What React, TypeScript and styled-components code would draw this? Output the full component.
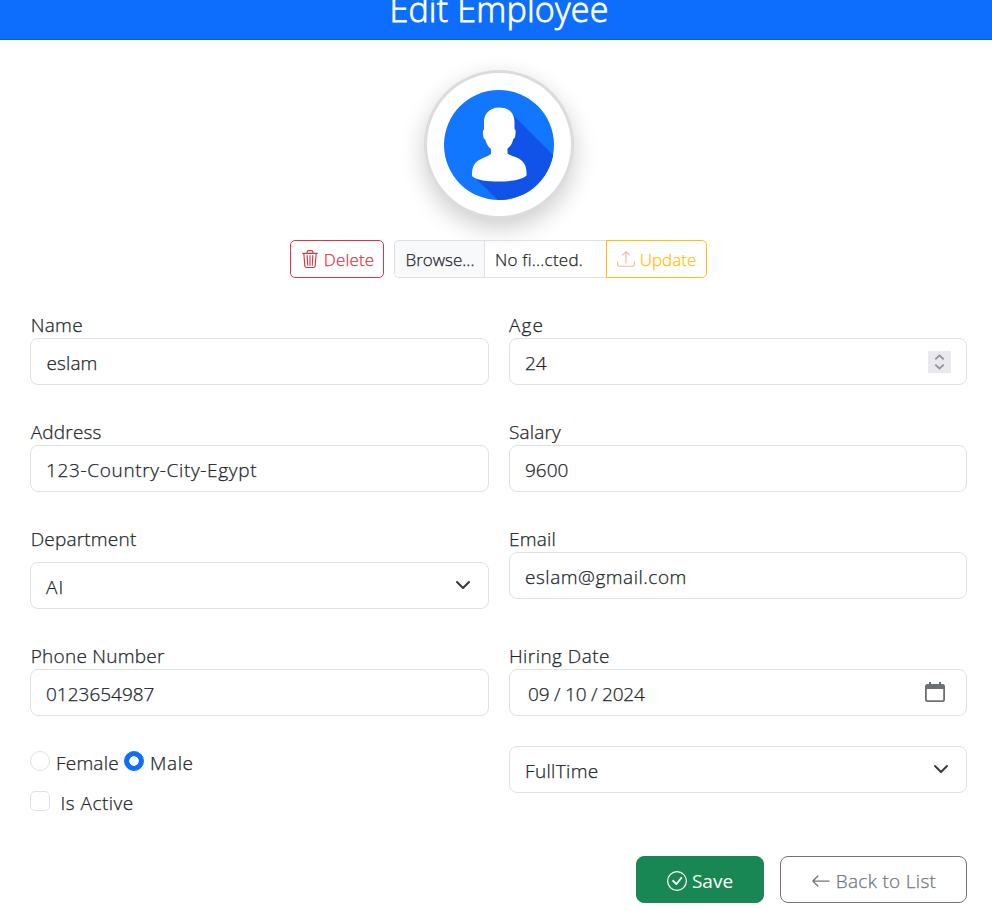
import React from 'react';
import styled, { createGlobalStyle } from 'styled-components';
import { BsTrash3, BsUpload, BsCheckCircle, BsArrowLeft } from 'react-icons/bs';

const GlobalStyle = createGlobalStyle`
  * { box-sizing: border-box; }
  body {
    margin: 0;
    background: #fff;
    color: #212529;
    font: 300 19px 'Open Sans', 'Noto Sans', sans-serif;
    -webkit-text-stroke: 0.25px currentColor;
    overflow: hidden;
  }
`;

const Header = styled.header`
  height: 40px;
  overflow: hidden;
  display: flex;
  justify-content: center;
  padding-left: 6px;
  background: #0d6efd;
  border-bottom: 1px solid #0b5ed7;
`;

const Title = styled.h1`
  margin: -15px 0 0;
  height: 48px;
  line-height: 48px;
  font-size: 34px;
  font-weight: 300;
  letter-spacing: 0.2px;
  -webkit-text-stroke: 0.8px currentColor;
  color: #fff;
  white-space: nowrap;
`;

const Content = styled.main`
  width: 937px;
  margin-left: 30px;
  padding-top: 30px;
  display: flex;
  flex-direction: column;
`;

const Avatar = styled.div`
  width: 150px;
  height: 149px;
  align-self: center;
  display: flex;
  align-items: center;
  justify-content: center;
  border: 3px solid #dcdcdc;
  border-radius: 50%;
  background: #fff;
  box-shadow: 0 9px 24px rgba(0, 0, 0, 0.2);
`;

const PhotoActions = styled.div`
  height: 38px;
  margin-top: 21px;
  align-self: center;
  display: flex;
  font-size: 17px;
  white-space: nowrap;
`;

const SmallButton = styled.button<{ $color: string; $width: number; $joined?: boolean }>`
  width: ${(p) => p.$width}px;
  height: 38px;
  padding: 0 0 0 ${(p) => (p.$joined ? 0 : 1)}px;
  display: flex;
  align-items: center;
  justify-content: center;
  gap: 5px;
  font: inherit;
  letter-spacing: ${(p) => (p.$joined ? 0 : 0.15)}px;
  color: ${(p) => p.$color};
  background: #fff;
  border: 1px solid ${(p) => p.$color};
  border-radius: ${(p) => (p.$joined ? '0 5px 5px 0' : '5px')};
`;

const FilePicker = styled.div`
  width: 212px;
  height: 38px;
  margin-left: 10px;
  display: flex;
  line-height: 37px;
  border: 1px solid #dee2e6;
  border-right: 0;
  border-radius: 5px 0 0 5px;
  overflow: hidden;
`;

const Browse = styled.span`
  width: 90px;
  padding-left: 10.5px;
  background: #f8f9fa;
  border-right: 1px solid #dee2e6;
`;

const FileName = styled.span`
  padding-left: 10px;
  letter-spacing: 0.23px;
`;

const Grid = styled.div`
  margin-top: 33px;
  display: grid;
  grid-template-columns: 459px 458px;
  column-gap: 20px;
  row-gap: 33px;
`;

const Field = styled.div<{ $raised?: boolean }>`
  margin-top: ${(p) => (p.$raised ? -3 : 0)}px;
  display: flex;
  flex-direction: column;
`;

const Label = styled.label<{ $gap?: number; $ls?: number; $left?: number }>`
  height: 27px;
  line-height: 28px;
  padding-left: ${(p) => p.$left ?? 0.7}px;
  margin-bottom: ${(p) => p.$gap ?? 0}px;
  letter-spacing: ${(p) => p.$ls ?? 0.2}px;
`;

const Control = styled.div<{ $inset?: number; $end?: number; $ls?: number }>`
  height: 47px;
  padding: 2px ${(p) => p.$end ?? 15}px 0 ${(p) => p.$inset ?? 15}px;
  display: flex;
  align-items: center;
  justify-content: space-between;
  letter-spacing: ${(p) => p.$ls ?? 0}px;
  border: 1px solid #dee2e6;
  border-radius: 8px;
  background: #fff;

  svg { margin-top: -2.5px; flex: none; }
`;

const Stepper = styled.span`
  width: 23px;
  height: 22px;
  margin-top: -2px;
  display: flex;
  align-items: center;
  justify-content: center;
  background: #e9e9ed;

  svg { margin: 0; }
`;

const Choices = styled.div`
  margin-top: -3px;
  display: flex;
  flex-direction: column;
  gap: 10px;
`;

const ChoiceLine = styled.div`
  height: 30px;
  display: flex;
  align-items: center;
`;

const Mark = styled.span<{ $round?: boolean; $on?: boolean }>`
  width: 20px;
  height: 20px;
  border-radius: ${(p) => (p.$round ? '50%' : '5px')};
  border: 1px solid ${(p) => (p.$on ? '#0d6efd' : '#dee2e6')};
  background: ${(p) => (p.$on ? 'radial-gradient(circle, #fff 4.4px, #0d6efd 5.1px) border-box' : '#fff')};
`;

const ChoiceText = styled.span<{ $left: number; $width?: number; $ls?: number }>`
  margin-left: ${(p) => p.$left}px;
  padding-top: 4px;
  width: ${(p) => (p.$width ? `${p.$width}px` : 'auto')};
  letter-spacing: ${(p) => p.$ls ?? 0}px;
  white-space: nowrap;
`;

const Footer = styled.div`
  margin-top: 40px;
  display: flex;
  justify-content: flex-end;
  gap: 16px;
`;

const LargeButton = styled.button<{ $width: number; $solid?: boolean }>`
  width: ${(p) => p.$width}px;
  height: 47px;
  padding: 2px 0 0;
  display: flex;
  align-items: center;
  justify-content: center;
  gap: 5px;
  font: inherit;
  font-weight: ${(p) => (p.$solid ? 400 : 300)};
  letter-spacing: ${(p) => (p.$solid ? 0 : 0.3)}px;
  -webkit-text-stroke: ${(p) => (p.$solid ? 0 : 0.25)}px currentColor;
  color: ${(p) => (p.$solid ? '#fff' : '#6c757d')};
  background: ${(p) => (p.$solid ? '#198754' : '#fff')};
  border: 1px solid ${(p) => (p.$solid ? '#198754' : '#6c757d')};
  border-radius: 8px;

  svg { margin-top: 0; }
`;

const Chevron = () => (
  <svg width="16" height="16" viewBox="0 0 16 16" fill="none" stroke="#343a40" strokeWidth="2" strokeLinecap="round" strokeLinejoin="round">
    <path d="m2 5 6 6 6-6" />
  </svg>
);

const CalendarIcon = () => (
  <svg width="20" height="20" viewBox="0 0 20 20">
    <path
      fill="#6d7073"
      fillRule="evenodd"
      d="M4 0h2v2h8V0h2v2h1.500A2.500 2.500 0 0 1 20 4.500V17.500A2.500 2.500 0 0 1 17.500 20h-15A2.500 2.500 0 0 1 0 17.500V4.500A2.500 2.500 0 0 1 2.500 2H4zM1.800 7v10.200q0 1 1 1h14.400q1 0 1-1V7z"
    />
  </svg>
);

const StepperIcon = () => (
  <svg width="11" height="16" viewBox="0 0 11 16" fill="none" stroke="#8f8f9d" strokeWidth="1.8">
    <path d="M1.300 5.300 5.500 1.400l4.200 3.900M1.300 10.700l4.200 3.900 4.200-3.900" />
  </svg>
);

const Person = () => (
  <svg width="110" height="110" viewBox="0 0 110 110">
    <defs>
      <clipPath id="disc">
        <circle cx="55" cy="55" r="55" />
      </clipPath>
    </defs>
    <g clipPath="url(#disc)">
      <path fill="#1177ff" d="M0 0h110v110H0z" />
      <path fill="#1153e8" d="M69 25 112 68v46H58L32 89l22-22z" />
    </g>
    <path
      fill="#fff"
      d="M50 18q4-1 10 0c7 1.500 10.500 7.500 10.500 14v7q1.500 0 1 4.500-.3 5-2.200 5.500c-.8 4-2.800 7.500-5.800 9.500v5c4 3 10 3.500 14 7 4 3.300 5.300 8 5 15-5 4.500-16 6-27.500 6S32.500 90.500 28 86c-.5-7 1.500-12 5.500-15 4-3.300 9.500-4 13.500-7v-5c-3-2-4.500-5.500-5.800-9.500q-1.900-.5-2.200-5.500-.5-4.500 1-4.500v-7c0-6.500 3-12.500 10-14z"
    />
  </svg>
);

export default function App() {
  return (
    <>
      <GlobalStyle />
      <Header>
        <Title>Edit Employee</Title>
      </Header>
      <Content>
        <Avatar>
          <Person />
        </Avatar>
        <PhotoActions>
          <SmallButton $color="#dc3545" $width={94}>
            <BsTrash3 size={18} />
            <span>Delete</span>
          </SmallButton>
          <FilePicker>
            <Browse>Browse...</Browse>
            <FileName>No fi...cted.</FileName>
          </FilePicker>
          <SmallButton $color="#ffc107" $width={101} $joined>
            <BsUpload size={18} color="#ffb59a" />
            <span>Update</span>
          </SmallButton>
        </PhotoActions>

        <Grid>
          <Field>
            <Label $ls={0.3}>Name</Label>
            <Control $ls={0.1} $inset={15.5}>eslam</Control>
          </Field>
          <Field>
            <Label $left={0} $ls={1.1}>Age</Label>
            <Control>
              24
              <Stepper>
                <StepperIcon />
              </Stepper>
            </Control>
          </Field>
          <Field>
            <Label>Address</Label>
            <Control $ls={0.66}>123-Country-City-Egypt</Control>
          </Field>
          <Field>
            <Label $left={0} $ls={0.15}>Salary</Label>
            <Control>9600</Control>
          </Field>
          <Field>
            <Label $gap={10} $ls={0.2}>Department</Label>
            <Control $end={17} $ls={1}>
              AI
              <Chevron />
            </Control>
          </Field>
          <Field>
            <Label $left={0} $ls={0.2}>Email</Label>
            <Control $ls={0.52}>eslam@gmail.com</Control>
          </Field>
          <Field>
            <Label $ls={0.25}>Phone Number</Label>
            <Control>0123654987</Control>
          </Field>
          <Field>
            <Label $left={0} $ls={0.45}>Hiring Date</Label>
            <Control $inset={18} $end={21} $ls={-0.2}>
              09 / 10 / 2024
              <CalendarIcon />
            </Control>
          </Field>
          <Choices>
            <ChoiceLine>
              <Mark $round />
              <ChoiceText $left={6} $width={68} $ls={0.2}>Female</ChoiceText>
              <Mark $round $on />
              <ChoiceText $left={6} $ls={0.6}>Male</ChoiceText>
            </ChoiceLine>
            <ChoiceLine>
              <Mark />
              <ChoiceText $left={10.5} $ls={0.48}>Is Active</ChoiceText>
            </ChoiceLine>
          </Choices>
          <Field $raised>
            <Control $end={17} $ls={0.35}>
              FullTime
              <Chevron />
            </Control>
          </Field>
        </Grid>

        <Footer>
          <LargeButton $width={128} $solid>
            <BsCheckCircle size={20} />
            <span>Save</span>
          </LargeButton>
          <LargeButton $width={187}>
            <BsArrowLeft size={20} />
            <span>Back to List</span>
          </LargeButton>
        </Footer>
      </Content>
    </>
  );
}
